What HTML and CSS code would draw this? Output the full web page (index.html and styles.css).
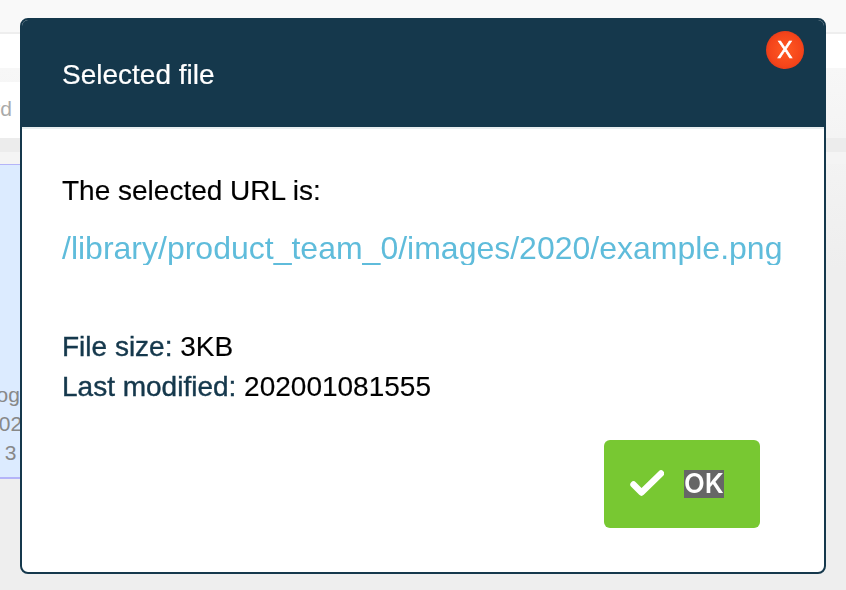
FILE: index.html
```html
<!DOCTYPE html>
<html lang="en">
<head>
<meta charset="utf-8">
<title>Selected file</title>
<link rel="stylesheet" href="styles.css">
</head>
<body>
<div class="page">
  <div class="topbar"></div>
  <div class="nav"></div>
  <div class="content">
    <div class="panel">
      <div class="search"><span class="search-text">Search by keyword</span></div>
      <div class="strip"></div>
      <div class="card">
        <div class="card-text">
          <div>Login</div>
          <div>2020</div>
          <div>3</div>
        </div>
      </div>
    </div>
  </div>
</div>
<div class="modal">
  <header class="modal-head">
    <h1 class="modal-title">Selected file</h1>
    <button class="close" type="button">X</button>
  </header>
  <div class="modal-body">
    <p class="label">The selected URL is:</p>
    <p class="url">/library/product_team_0/images/2020/example.png</p>
    <dl class="meta">
      <div class="meta-row"><dt>File size:</dt> <dd>3KB</dd></div>
      <div class="meta-row"><dt>Last modified:</dt> <dd>202001081555</dd></div>
    </dl>
    <div class="actions">
      <button class="ok" type="button">
        <svg class="ok-icon" viewBox="0 0 34 26" width="34" height="26" aria-hidden="true"><path d="M3.5 14.5 L11.5 22.5 L31 3.5" fill="none" stroke="#fff" stroke-width="6.4" stroke-linecap="round" stroke-linejoin="round"/></svg>
        <span class="ok-text">OK</span>
      </button>
    </div>
  </div>
</div>
</body>
</html>
```
FILE: styles.css
```css
* { box-sizing: border-box; }
html, body { margin: 0; height: 100%; overflow: hidden; }
body { background: #eeeeee; font-family: "Liberation Sans", Arial, sans-serif; }
.page { display: flex; flex-direction: column; height: 590px; }
.topbar { height: 34px; background: #f9f9f9; border-bottom: 2px solid #eeeeee; }
.nav { height: 34px; background: #ffffff; }
.content { flex: 1; background: linear-gradient(#f7f7f7, #eeeeee 200px); }
.panel { padding-top: 14px; }
.search { height: 56px; width: 20px; padding: 0 8px 3px 0; background: #ffffff; overflow: hidden; display: flex; justify-content: flex-end; align-items: center; }
.search-text { white-space: nowrap; font-size: 21px; color: #aaaaaa; flex: none; }
.strip { height: 26px; background: linear-gradient(#ececec 0 14px, #f4f4f4 14px); }
.card { height: 315px; width: 20px; background: #dcebff; border-top: 1px solid #b4b4f8; border-bottom: 2px solid #b4b4f8; padding-top: 215px; }
.card-text { width: 21px; font-size: 21px; line-height: 29px; color: #888888; display: flex; flex-direction: column; align-items: center; white-space: nowrap; }
.modal { position: fixed; left: 20px; top: 18px; width: 806px; height: 556px; background: #ffffff; border: 2px solid #15384c; border-radius: 8px; overflow: hidden; }
.modal-head { height: 109px; margin: -2px -2px 0; background: #15384c; display: flex; align-items: center; padding: 0 42px; position: relative; }
.modal-title { margin: 0; font-size: 28px; font-weight: 400; color: #ffffff; position: relative; top: 2px; -webkit-text-stroke: 0.2px #ffffff; }
.close { position: absolute; left: 746px; top: 13px; width: 38px; height: 38px; border: 0; border-radius: 50%; padding: 0; background: radial-gradient(circle at 52% 50%, #ff5a22 0, #f4441a 60%, #d8341a 86%, rgba(150,50,40,0.5) 100%); color: #fff; font: 400 23px/38px "Liberation Sans", Arial, sans-serif; -webkit-text-stroke: 0.6px #ffffff; }
.modal-body { padding: 46px 40px 0; border-top: 2px solid #e8eef0; }
.label { margin: 0; font-size: 28px; line-height: 32px; color: #000000; -webkit-text-stroke: 0.15px #000000; }
.url { margin: 23px 0 0; height: 35px; overflow: hidden; font-size: 32px; line-height: 36px; color: #5fbcdb; white-space: nowrap; }
.meta { margin: 62px 0 0; font-size: 28px; line-height: 40px; }
.meta-row { display: block; }
.meta dt { display: inline; color: #15384c; -webkit-text-stroke: 0.4px #15384c; }
.meta dd { display: inline; margin: 0; color: #000000; -webkit-text-stroke: 0.15px #000000; }
.actions { display: flex; justify-content: flex-end; padding: 33px 24px 0 0; }
.ok { width: 156px; height: 88px; border: 0; border-radius: 6px; background: #78c832; display: flex; align-items: center; padding: 0 0 0 26px; gap: 20px; }
.ok-icon { flex: none; margin-top: -2px; }
.ok-text { background: #666666; color: #ffffff; font: 600 27px/28px "Inter", sans-serif; }
```
